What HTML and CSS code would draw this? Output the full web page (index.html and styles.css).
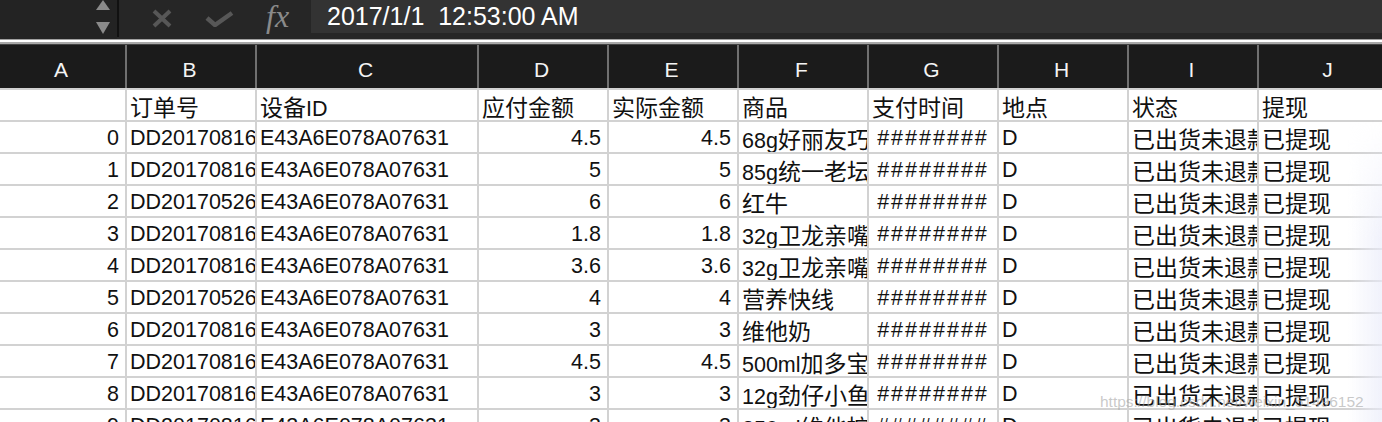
FILE: index.html
```html
<!DOCTYPE html>
<html lang="zh">
<head>
<meta charset="utf-8">
<title>Sheet</title>
<link rel="stylesheet" href="styles.css">
</head>
<body>
<div class="app">
  <div class="formula-bar">
    <div class="name-box">
      <div class="spin">
        <svg width="14" height="11" viewBox="0 0 14 11"><polygon points="7,0 14,10 0,10" fill="#8a8a8a"/></svg>
        <svg width="14" height="12" viewBox="0 0 14 12"><polygon points="0,0 14,0 7,12" fill="#8a8a8a"/></svg>
      </div>
    </div>
    <div class="divider"></div>
    <div class="tools">
      <svg class="ic-x" width="22" height="19" viewBox="0 0 22 19"><path d="M3 2 L19 17 M19 2 L3 17" stroke="#575757" stroke-width="4" fill="none"/></svg>
      <svg class="ic-ok" width="30" height="16" viewBox="0 0 30 16"><path d="M2 7 L10 14 L27 2" stroke="#575757" stroke-width="4.5" fill="none"/></svg>
      <span class="fx">fx</span>
    </div>
    <div class="input">2017/1/1&nbsp;&nbsp;12:53:00 AM</div>
  </div>
  <div class="sep"></div>
  <div class="col-heads">
    <div class="ch">A</div><div class="ch">B</div><div class="ch">C</div><div class="ch">D</div><div class="ch">E</div><div class="ch">F</div><div class="ch">G</div><div class="ch">H</div><div class="ch">I</div><div class="ch">J</div>
  </div>
  <div class="grid">
    <div class="c"></div><div class="c"><span class="zh">订单号</span></div><div class="c"><span class="zh">设备</span>ID</div><div class="c"><span class="zh">应付金额</span></div><div class="c"><span class="zh">实际金额</span></div><div class="c"><span class="zh">商品</span></div><div class="c"><span class="zh">支付时间</span></div><div class="c"><span class="zh">地点</span></div><div class="c"><span class="zh">状态</span></div><div class="c"><span class="zh">提现</span></div>

    <div class="c n">0</div><div class="c">DD20170816</div><div class="c">E43A6E078A07631</div><div class="c n">4.5</div><div class="c n">4.5</div><div class="c">68g<span class="zh">好丽友巧克力派</span></div><div class="c h">########</div><div class="c">D</div><div class="c"><span class="zh">已出货未退款</span></div><div class="c"><span class="zh">已提现</span></div>

    <div class="c n">1</div><div class="c">DD20170816</div><div class="c">E43A6E078A07631</div><div class="c n">5</div><div class="c n">5</div><div class="c">85g<span class="zh">统一老坛酸菜</span></div><div class="c h">########</div><div class="c">D</div><div class="c"><span class="zh">已出货未退款</span></div><div class="c"><span class="zh">已提现</span></div>

    <div class="c n">2</div><div class="c">DD20170526</div><div class="c">E43A6E078A07631</div><div class="c n">6</div><div class="c n">6</div><div class="c"><span class="zh">红牛</span></div><div class="c h">########</div><div class="c">D</div><div class="c"><span class="zh">已出货未退款</span></div><div class="c"><span class="zh">已提现</span></div>

    <div class="c n">3</div><div class="c">DD20170816</div><div class="c">E43A6E078A07631</div><div class="c n">1.8</div><div class="c n">1.8</div><div class="c">32g<span class="zh">卫龙亲嘴烧</span></div><div class="c h">########</div><div class="c">D</div><div class="c"><span class="zh">已出货未退款</span></div><div class="c"><span class="zh">已提现</span></div>

    <div class="c n">4</div><div class="c">DD20170816</div><div class="c">E43A6E078A07631</div><div class="c n">3.6</div><div class="c n">3.6</div><div class="c">32g<span class="zh">卫龙亲嘴烧</span></div><div class="c h">########</div><div class="c">D</div><div class="c"><span class="zh">已出货未退款</span></div><div class="c"><span class="zh">已提现</span></div>

    <div class="c n">5</div><div class="c">DD20170526</div><div class="c">E43A6E078A07631</div><div class="c n">4</div><div class="c n">4</div><div class="c"><span class="zh">营养快线</span></div><div class="c h">########</div><div class="c">D</div><div class="c"><span class="zh">已出货未退款</span></div><div class="c"><span class="zh">已提现</span></div>

    <div class="c n">6</div><div class="c">DD20170816</div><div class="c">E43A6E078A07631</div><div class="c n">3</div><div class="c n">3</div><div class="c"><span class="zh">维他奶</span></div><div class="c h">########</div><div class="c">D</div><div class="c"><span class="zh">已出货未退款</span></div><div class="c"><span class="zh">已提现</span></div>

    <div class="c n">7</div><div class="c">DD20170816</div><div class="c">E43A6E078A07631</div><div class="c n">4.5</div><div class="c n">4.5</div><div class="c">500ml<span class="zh">加多宝</span></div><div class="c h">########</div><div class="c">D</div><div class="c"><span class="zh">已出货未退款</span></div><div class="c"><span class="zh">已提现</span></div>

    <div class="c n">8</div><div class="c">DD20170816</div><div class="c">E43A6E078A07631</div><div class="c n">3</div><div class="c n">3</div><div class="c">12g<span class="zh">劲仔小鱼</span></div><div class="c h">########</div><div class="c">D</div><div class="c"><span class="zh">已出货未退款</span></div><div class="c"><span class="zh">已提现</span></div>

    <div class="c n">9</div><div class="c">DD20170816</div><div class="c">E43A6E078A07631</div><div class="c n">3</div><div class="c n">3</div><div class="c">250ml<span class="zh">维他柠檬茶</span></div><div class="c h">########</div><div class="c">D</div><div class="c"><span class="zh">已出货未退款</span></div><div class="c"><span class="zh">已提现</span></div>
  </div>
  <div class="fade"></div>
  <div class="watermark">https://blog.csdn.net/weixin_51496152</div>
</div>
</body>
</html>
```
FILE: styles.css
```css
* { box-sizing: border-box; }
html, body { margin: 0; padding: 0; background: #fff; }
.app {
  position: relative;
  width: 1382px;
  height: 422px;
  overflow: hidden;
  font-family: "Liberation Sans", "Noto Sans CJK SC", sans-serif;
}
.formula-bar {
  display: flex;
  height: 39px;
  background: #262626;
}
.name-box {
  width: 117px;
  background: #232323;
  display: flex;
  justify-content: flex-end;
  padding-right: 7px;
}
.spin {
  display: flex;
  flex-direction: column;
  justify-content: space-between;
  height: 34px;
}
.spin svg { display: block; }
.divider {
  width: 2px;
  height: 37px;
  background: #111;
}
.tools {
  width: 192px;
  display: flex;
  align-items: center;
  padding-left: 32px;
  height: 36px;
}
.ic-ok { margin-left: 32px; margin-top: 1px; }
.fx {
  margin-left: 31px;
  font-family: "Liberation Serif", serif;
  font-style: italic;
  font-size: 32px;
  color: #8a8a8a;
  line-height: 36px;
  margin-top: -4px;
}
.input {
  flex: 1;
  height: 33px;
  background: #333;
  color: #fff;
  font-size: 25px;
  line-height: 33px;
  padding-left: 16px;
  white-space: pre;
}
.sep {
  height: 6px;
  background: linear-gradient(#a0a0a0 0, #a0a0a0 1px, #fff 1px, #fff 3px, #a8a8a8 3px, #a8a8a8 5px, #444 5px);
}
.col-heads, .grid {
  display: grid;
  grid-template-columns: 125px 128px 220px 128px 128px 128px 128px 128px 128px 140px;
  column-gap: 2px;
}
.col-heads {
  height: 43px;
  background: #707070;
}
.ch {
  background: #1b1b1b;
  color: #f4f4f4;
  font-size: 21px;
  text-align: center;
  line-height: 43px;
  padding-top: 3px;
  padding-right: 3px;
  overflow: hidden;
}
.grid {
  background: #d2d2d2;
  row-gap: 2px;
  padding-top: 2px;
  grid-auto-rows: 30px;
}
.c {
  background: #fff;
  color: #111;
  font-size: 21.5px;
  line-height: 28px;
  padding: 2px 0 0 3px;
  white-space: nowrap;
  overflow: hidden;
}
.c.n { text-align: right; padding-right: 6px; padding-left: 0; }
.c.h { text-align: center; letter-spacing: 2px; padding-left: 0; }
.zh {
  font-family: "Noto Sans CJK SC", sans-serif;
  font-size: 23px;
}
.fade {
  position: absolute;
  right: 0;
  top: 120px;
  width: 34px;
  bottom: 0;
  background: linear-gradient(to right, rgba(238,240,250,0), rgba(234,236,250,0.7));
  -webkit-mask-image: linear-gradient(to bottom, transparent, #000 120px);
  mask-image: linear-gradient(to bottom, transparent, #000 120px);
}
.watermark {
  position: absolute;
  left: 1100px;
  top: 393px;
  font-size: 15.5px;
  color: rgba(165,165,165,0.6);
  white-space: nowrap;
}
```
